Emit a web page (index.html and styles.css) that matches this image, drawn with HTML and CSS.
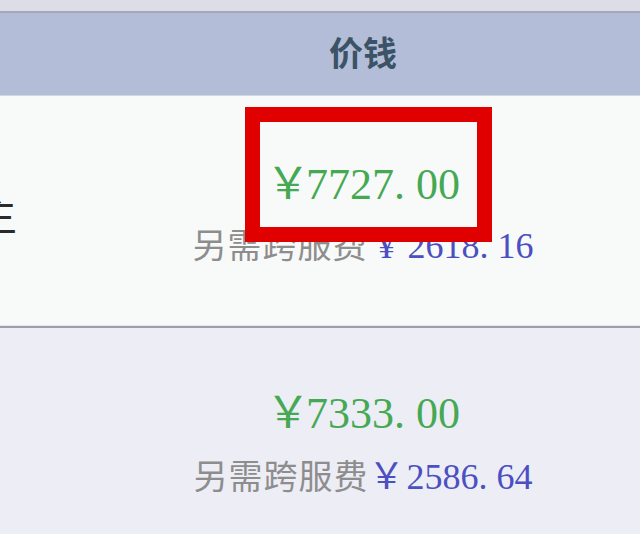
FILE: index.html
```html
<!DOCTYPE html>
<html lang="zh">
<head>
<meta charset="utf-8">
<title>价钱</title>
<link rel="stylesheet" href="styles.css">
</head>
<body>
<div class="page">
  <div class="topstrip"></div>
  <div class="header">
    <div class="hcell hleft"></div>
    <div class="hcell hprice">价钱</div>
  </div>
  <div class="row row-a">
    <div class="cell left"><span class="name">主</span></div>
    <div class="cell price">
      <div class="big"><span class="yen">￥</span>7727<span class="dot">.</span>00</div>
      <div class="small"><span class="cjk">另需跨服费</span><span class="sp"></span><span class="fee"><span class="hyen">¥</span>2618<span class="dot">.</span>16</span></div>
      <div class="highlight"></div>
    </div>
  </div>
  <div class="divider"></div>
  <div class="row row-b">
    <div class="cell left"></div>
    <div class="cell price">
      <div class="big"><span class="yen">￥</span>7333<span class="dot">.</span>00</div>
      <div class="small"><span class="cjk">另需跨服费</span><span class="fee"><span class="yen">￥</span>2586<span class="dot">.</span>64</span></div>
    </div>
  </div>
</div>
</body>
</html>
```
FILE: styles.css
```css
html, body {
  margin: 0;
  padding: 0;
}
body {
  width: 640px;
  height: 534px;
  overflow: hidden;
  background: #ededf6;
  font-family: "Liberation Serif", "Noto Sans CJK SC", serif;
}
.page {
  display: flex;
  flex-direction: column;
}
.topstrip {
  height: 11px;
  background: #dcdde6;
  border-bottom: 2px solid #a3a8bd;
}
.header {
  height: 82px;
  background: #b4bdd7;
  border-bottom: 1px solid #d3d7e5;
  display: grid;
  grid-template-columns: 86px 554px;
  align-items: center;
}
.hprice {
  text-align: center;
  font-family: "Noto Sans CJK SC", sans-serif;
  font-weight: 700;
  font-size: 34px;
  line-height: 40px;
  color: #3a5366;
  padding-bottom: 4px;
}
.row {
  display: grid;
  grid-template-columns: 86px 554px;
  height: 229px;
}
.row-a {
  background: #f8f9f9;
}
.row-b {
  background: #ededf6;
}
.divider {
  height: 2px;
  background: #9b9eab;
  border-top: 1px solid #e6e8f0;
}
.cell.left {
  overflow: visible;
  padding-top: 92px;
}
.name {
  display: inline-block;
  margin-left: -25px;
  font-family: "Noto Sans CJK SC", sans-serif;
  font-size: 42px;
  line-height: 50px;
  color: #2a2a2a;
}
.cell.price {
  position: relative;
  display: flex;
  flex-direction: column;
  align-items: center;
  padding-top: 59px;
}
.row-b .cell.price {
  padding-top: 56px;
}
.big {
  font-size: 44px;
  line-height: 50px;
  color: #45a953;
  white-space: nowrap;
}
.yen {
  font-family: "Noto Sans CJK SC", sans-serif;
  font-weight: 400;
}
.big .yen {
  display: inline-block;
  width: 40px;
  font-size: 44px;
}
.dot {
  display: inline-block;
  width: 0.5em;
}
.small {
  margin-top: 14px;
  font-size: 36px;
  line-height: 40px;
  white-space: nowrap;
  display: flex;
  align-items: baseline;
}
.cjk {
  font-family: "Noto Sans CJK SC", sans-serif;
  color: #8d8d8d;
  font-size: 34px;
  letter-spacing: 1px;
}
.sp {
  display: inline-block;
  width: 10px;
}
.fee {
  color: #4b4fc0;
}
.hyen {
  display: inline-block;
  width: 30px;
}
.fee .yen {
  display: inline-block;
  width: 38px;
  font-size: 36px;
}
.highlight {
  position: absolute;
  left: 159px;
  top: 11px;
  width: 217px;
  height: 105px;
  border: 15px solid #e10000;
}
```
